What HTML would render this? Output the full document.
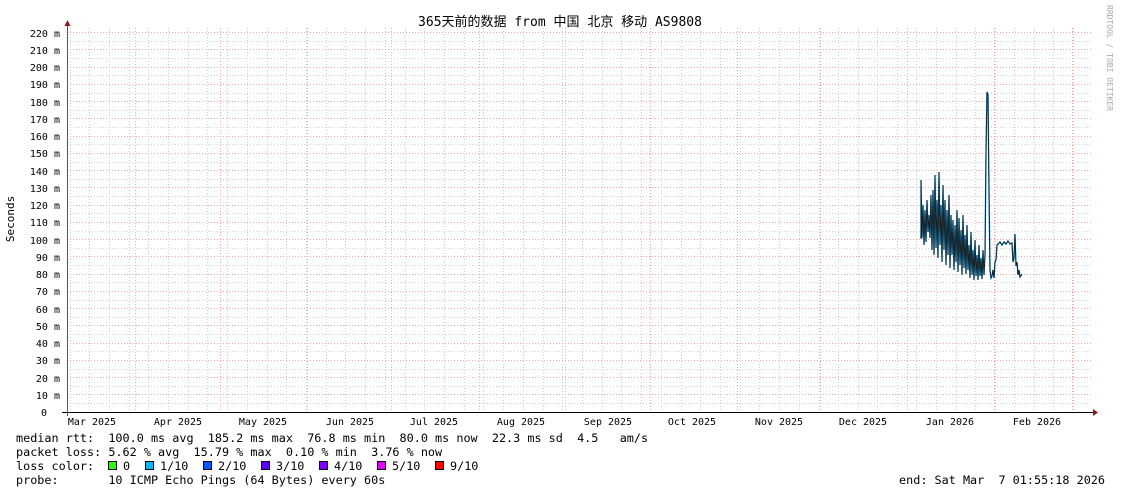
<!DOCTYPE html>
<html><head><meta charset="utf-8"><style>
html,body{margin:0;padding:0;background:#fff;}
svg{display:block;}
text{font-family:"DejaVu Sans Mono","Liberation Mono","Noto Sans CJK SC",monospace;fill:#000;white-space:pre;}
</style></head><body>
<svg width="1121" height="494" viewBox="0 0 1121 494" xmlns="http://www.w3.org/2000/svg">
<rect width="1121" height="494" fill="#fff"/>
<text x="560" y="26" font-size="13" text-anchor="middle" font-family="DejaVu Sans,Noto Sans CJK SC,sans-serif">365天前的数据 from 中国 北京 移动 AS9808</text>
<text transform="translate(1107,5) rotate(90)" font-size="8" style="fill:#aaa">RRDTOOL / TOBI OETIKER</text>
<text transform="translate(14,219) rotate(-90)" font-size="11" text-anchor="middle">Seconds</text>
<g stroke="#d0d0d0" stroke-width="1" stroke-dasharray="1,2">
<line x1="67" x2="1093" y1="403.5" y2="403.5"/><line x1="67" x2="1093" y1="386.5" y2="386.5"/><line x1="67" x2="1093" y1="369.5" y2="369.5"/><line x1="67" x2="1093" y1="351.5" y2="351.5"/><line x1="67" x2="1093" y1="334.5" y2="334.5"/><line x1="67" x2="1093" y1="317.5" y2="317.5"/><line x1="67" x2="1093" y1="300.5" y2="300.5"/><line x1="67" x2="1093" y1="282.5" y2="282.5"/><line x1="67" x2="1093" y1="265.5" y2="265.5"/><line x1="67" x2="1093" y1="248.5" y2="248.5"/><line x1="67" x2="1093" y1="231.5" y2="231.5"/><line x1="67" x2="1093" y1="213.5" y2="213.5"/><line x1="67" x2="1093" y1="196.5" y2="196.5"/><line x1="67" x2="1093" y1="179.5" y2="179.5"/><line x1="67" x2="1093" y1="162.5" y2="162.5"/><line x1="67" x2="1093" y1="144.5" y2="144.5"/><line x1="67" x2="1093" y1="127.5" y2="127.5"/><line x1="67" x2="1093" y1="110.5" y2="110.5"/><line x1="67" x2="1093" y1="93.5" y2="93.5"/><line x1="67" x2="1093" y1="75.5" y2="75.5"/><line x1="67" x2="1093" y1="58.5" y2="58.5"/><line x1="67" x2="1093" y1="41.5" y2="41.5"/>
<line y1="28" y2="412" x1="70.5" x2="70.5"/><line y1="28" y2="412" x1="89.5" x2="89.5"/><line y1="28" y2="412" x1="109.5" x2="109.5"/><line y1="28" y2="412" x1="129.5" x2="129.5"/><line y1="28" y2="412" x1="148.5" x2="148.5"/><line y1="28" y2="412" x1="168.5" x2="168.5"/><line y1="28" y2="412" x1="188.5" x2="188.5"/><line y1="28" y2="412" x1="207.5" x2="207.5"/><line y1="28" y2="412" x1="227.5" x2="227.5"/><line y1="28" y2="412" x1="247.5" x2="247.5"/><line y1="28" y2="412" x1="267.5" x2="267.5"/><line y1="28" y2="412" x1="286.5" x2="286.5"/><line y1="28" y2="412" x1="306.5" x2="306.5"/><line y1="28" y2="412" x1="326.5" x2="326.5"/><line y1="28" y2="412" x1="345.5" x2="345.5"/><line y1="28" y2="412" x1="365.5" x2="365.5"/><line y1="28" y2="412" x1="385.5" x2="385.5"/><line y1="28" y2="412" x1="405.5" x2="405.5"/><line y1="28" y2="412" x1="424.5" x2="424.5"/><line y1="28" y2="412" x1="444.5" x2="444.5"/><line y1="28" y2="412" x1="464.5" x2="464.5"/><line y1="28" y2="412" x1="483.5" x2="483.5"/><line y1="28" y2="412" x1="503.5" x2="503.5"/><line y1="28" y2="412" x1="523.5" x2="523.5"/><line y1="28" y2="412" x1="543.5" x2="543.5"/><line y1="28" y2="412" x1="562.5" x2="562.5"/><line y1="28" y2="412" x1="582.5" x2="582.5"/><line y1="28" y2="412" x1="602.5" x2="602.5"/><line y1="28" y2="412" x1="621.5" x2="621.5"/><line y1="28" y2="412" x1="641.5" x2="641.5"/><line y1="28" y2="412" x1="661.5" x2="661.5"/><line y1="28" y2="412" x1="681.5" x2="681.5"/><line y1="28" y2="412" x1="700.5" x2="700.5"/><line y1="28" y2="412" x1="720.5" x2="720.5"/><line y1="28" y2="412" x1="740.5" x2="740.5"/><line y1="28" y2="412" x1="759.5" x2="759.5"/><line y1="28" y2="412" x1="779.5" x2="779.5"/><line y1="28" y2="412" x1="799.5" x2="799.5"/><line y1="28" y2="412" x1="819.5" x2="819.5"/><line y1="28" y2="412" x1="838.5" x2="838.5"/><line y1="28" y2="412" x1="858.5" x2="858.5"/><line y1="28" y2="412" x1="877.5" x2="877.5"/><line y1="28" y2="412" x1="897.5" x2="897.5"/><line y1="28" y2="412" x1="916.5" x2="916.5"/><line y1="28" y2="412" x1="936.5" x2="936.5"/><line y1="28" y2="412" x1="956.5" x2="956.5"/><line y1="28" y2="412" x1="975.5" x2="975.5"/><line y1="28" y2="412" x1="995.5" x2="995.5"/><line y1="28" y2="412" x1="1014.5" x2="1014.5"/><line y1="28" y2="412" x1="1034.5" x2="1034.5"/><line y1="28" y2="412" x1="1053.5" x2="1053.5"/><line y1="28" y2="412" x1="1073.5" x2="1073.5"/>
</g>
<g stroke="#f2a8a8" stroke-width="1" stroke-dasharray="1,2">
<line x1="67" x2="1093" y1="394.5" y2="394.5"/><line x1="67" x2="1093" y1="377.5" y2="377.5"/><line x1="67" x2="1093" y1="360.5" y2="360.5"/><line x1="67" x2="1093" y1="343.5" y2="343.5"/><line x1="67" x2="1093" y1="325.5" y2="325.5"/><line x1="67" x2="1093" y1="308.5" y2="308.5"/><line x1="67" x2="1093" y1="291.5" y2="291.5"/><line x1="67" x2="1093" y1="274.5" y2="274.5"/><line x1="67" x2="1093" y1="256.5" y2="256.5"/><line x1="67" x2="1093" y1="239.5" y2="239.5"/><line x1="67" x2="1093" y1="222.5" y2="222.5"/><line x1="67" x2="1093" y1="205.5" y2="205.5"/><line x1="67" x2="1093" y1="187.5" y2="187.5"/><line x1="67" x2="1093" y1="170.5" y2="170.5"/><line x1="67" x2="1093" y1="153.5" y2="153.5"/><line x1="67" x2="1093" y1="136.5" y2="136.5"/><line x1="67" x2="1093" y1="118.5" y2="118.5"/><line x1="67" x2="1093" y1="101.5" y2="101.5"/><line x1="67" x2="1093" y1="84.5" y2="84.5"/><line x1="67" x2="1093" y1="67.5" y2="67.5"/><line x1="67" x2="1093" y1="49.5" y2="49.5"/><line x1="67" x2="1093" y1="32.5" y2="32.5"/>
<line y1="28" y2="412" x1="135.5" x2="135.5"/><line y1="28" y2="412" x1="220.5" x2="220.5"/><line y1="28" y2="412" x1="307.5" x2="307.5"/><line y1="28" y2="412" x1="391.5" x2="391.5"/><line y1="28" y2="412" x1="479.5" x2="479.5"/><line y1="28" y2="412" x1="565.5" x2="565.5"/><line y1="28" y2="412" x1="650.5" x2="650.5"/><line y1="28" y2="412" x1="737.5" x2="737.5"/><line y1="28" y2="412" x1="820.5" x2="820.5"/><line y1="28" y2="412" x1="907.5" x2="907.5"/><line y1="28" y2="412" x1="994.5" x2="994.5"/><line y1="28" y2="412" x1="1072.5" x2="1072.5"/>
</g>
<g font-size="10" text-anchor="end">
<text x="47" y="416">0</text><text x="60" y="399">10 m</text><text x="60" y="382">20 m</text><text x="60" y="364">30 m</text><text x="60" y="347">40 m</text><text x="60" y="330">50 m</text><text x="60" y="313">60 m</text><text x="60" y="295">70 m</text><text x="60" y="278">80 m</text><text x="60" y="261">90 m</text><text x="60" y="244">100 m</text><text x="60" y="226">110 m</text><text x="60" y="209">120 m</text><text x="60" y="192">130 m</text><text x="60" y="175">140 m</text><text x="60" y="157">150 m</text><text x="60" y="140">160 m</text><text x="60" y="123">170 m</text><text x="60" y="106">180 m</text><text x="60" y="88">190 m</text><text x="60" y="71">200 m</text><text x="60" y="54">210 m</text><text x="60" y="37">220 m</text>
</g>
<g font-size="10" text-anchor="middle">
<text x="92" y="425">Mar 2025</text><text x="178" y="425">Apr 2025</text><text x="263" y="425">May 2025</text><text x="350" y="425">Jun 2025</text><text x="434" y="425">Jul 2025</text><text x="521" y="425">Aug 2025</text><text x="608" y="425">Sep 2025</text><text x="692" y="425">Oct 2025</text><text x="779" y="425">Nov 2025</text><text x="863" y="425">Dec 2025</text><text x="950" y="425">Jan 2026</text><text x="1037" y="425">Feb 2026</text>
</g>
<defs><path id="d" d="M921,239 L921,180 L922,238 L923,205 L924,245 L925,210 L926,242 L927,200 L928,232 L929,215 L930,238 L931,195 L932,250 L933,190 L934,255 L935,175 L936,248 L937,200 L938,258 L939,172 L940,245 L941,205 L942,262 L943,185 L944,250 L945,200 L946,265 L947,210 L948,255 L949,195 L950,268 L951,215 L952,255 L953,220 L954,270 L955,225 L956,262 L957,210 L958,272 L959,218 L960,265 L961,230 L962,275 L963,215 L964,268 L965,235 L966,274 L967,225 L968,270 L969,245 L970,278 L971,232 L972,275 L973,250 L974,280 L975,240 L976,276 L977,255 L978,280 L979,245 L980,276 L981,258 L982,279 L983,250 L984,275 L985,255 L986,152 L987,92 L988,95 L989,190 L990,270 L991,278 L992,276 L993,270 L994,278 L995,262 L996,260 L997,245 L998,244 L1000,242 L1002,245 L1004,242 L1006,244 L1008,241 L1010,244 L1012,243 L1013,262 L1014,258 L1015,234 L1016,266 L1017,262 L1018,275 L1019,270 L1020,277 L1022,274"/></defs>
<use href="#d" fill="none" stroke="#00aaff" stroke-width="1.4"/>
<use href="#d" fill="none" stroke="#1a1a1a" stroke-width="0.9"/>
<line x1="62" x2="1094" y1="412.5" y2="412.5" stroke="#000"/>
<line x1="67.5" x2="67.5" y1="416" y2="24" stroke="#555"/>
<polygon points="1093,409 1098,412.5 1093,416" fill="#8b1a1a"/>
<polygon points="64.5,26 67.5,20 70.5,26" fill="#8b1a1a"/>
<g font-size="11.8">
<text x="16" y="442">median rtt:  100.0 ms avg  185.2 ms max  76.8 ms min  80.0 ms now  22.3 ms sd  4.5   am/s</text>
<text x="16" y="456">packet loss: 5.62 % avg  15.79 % max  0.10 % min  3.76 % now</text>
<text x="16" y="470">loss color:</text><text x="123" y="470">0</text><text x="160" y="470">1/10</text><text x="218" y="470">2/10</text><text x="276" y="470">3/10</text><text x="334" y="470">4/10</text><text x="392" y="470">5/10</text><text x="450" y="470">9/10</text>
<text x="16" y="484">probe:       10 ICMP Echo Pings (64 Bytes) every 60s</text>
<text x="1105" y="484" text-anchor="end">end: Sat Mar  7 01:55:18 2026</text>
</g>
<g stroke="#000" stroke-width="1">
<rect x="108.5" y="461.5" width="8" height="8" fill="#26ff00"/>
<rect x="145.5" y="461.5" width="8" height="8" fill="#00b8ff"/>
<rect x="203.5" y="461.5" width="8" height="8" fill="#0059ff"/>
<rect x="261.5" y="461.5" width="8" height="8" fill="#5e00ff"/>
<rect x="319.5" y="461.5" width="8" height="8" fill="#7e00ff"/>
<rect x="377.5" y="461.5" width="8" height="8" fill="#dd00ff"/>
<rect x="435.5" y="461.5" width="8" height="8" fill="#ff0000"/>
</g>
</svg>
</body></html>
